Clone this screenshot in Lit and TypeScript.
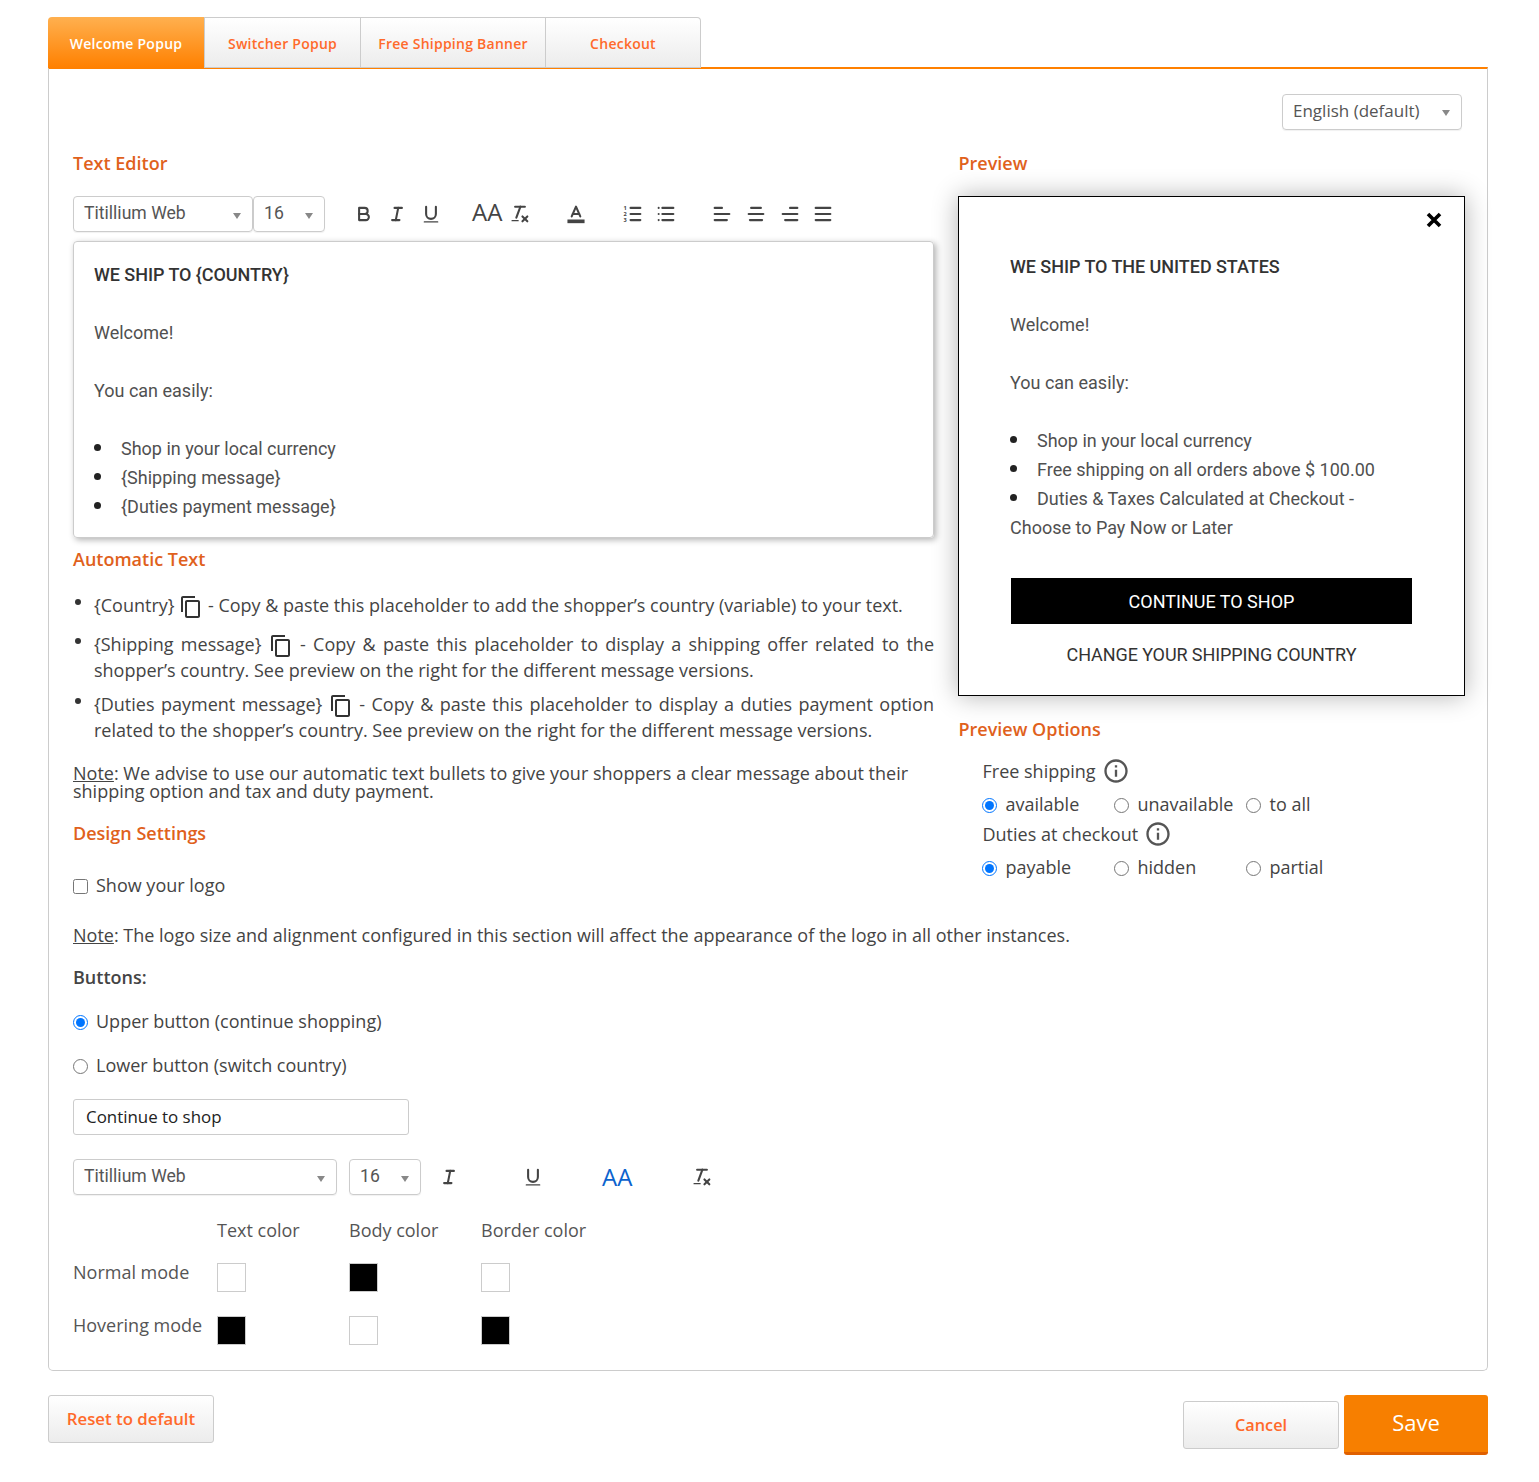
import { LitElement, html, css, svg } from "lit";
import { customElement } from "lit/decorators.js";

const st = (inner: unknown, size = 22) => html`<svg class="qi" width=${size} height=${size} viewBox="0 0 18 18">${inner}</svg>`;
const bold = () => st(svg`<path d="M5,4H9.5A2.5,2.5,0,0,1,12,6.5v0A2.5,2.5,0,0,1,9.5,9H5V4Z"/><path d="M5,9h5.5A2.5,2.5,0,0,1,13,11.5v0A2.5,2.5,0,0,1,10.5,14H5V9Z"/>`);
const italic = () => st(svg`<line x1="7" x2="13" y1="4" y2="4"/><line x1="5" x2="11" y1="14" y2="14"/><line x1="8" x2="10" y1="14" y2="4"/>`);
const underline = () => st(svg`<path d="M5,3V9a4,4,0,0,0,4,4H9a4,4,0,0,0,4-4V3"/><rect class="f" x="3" y="15" width="12" height="1" rx=".5"/>`);
const clean = () => st(svg`<line x1="5" x2="13" y1="3" y2="3"/><line x1="6" x2="9.35" y1="12" y2="3"/><line x1="11" x2="15" y1="11" y2="15"/><line x1="15" x2="11" y1="11" y2="15"/><rect class="f" x="2" y="14" width="6" height="1" rx=".5"/>`);
const color = () => st(svg`<polyline points="5.5 11 9 3 12.5 11"/><line x1="11.63" x2="6.38" y1="9" y2="9"/><rect class="f" x="2" y="13.5" width="14" height="3"/>`);
const ol = () => st(svg`<line x1="7" x2="15" y1="4" y2="4"/><line x1="7" x2="15" y1="9" y2="9"/><line x1="7" x2="15" y1="14" y2="14"/><text class="n" x="2.5" y="5.6">1</text><text class="n" x="2.5" y="10.6">2</text><text class="n" x="2.5" y="15.6">3</text>`);
const ul = () => st(svg`<line x1="6" x2="15" y1="4" y2="4"/><line x1="6" x2="15" y1="9" y2="9"/><line x1="6" x2="15" y1="14" y2="14"/><line x1="3" x2="3" y1="4" y2="4"/><line x1="3" x2="3" y1="9" y2="9"/><line x1="3" x2="3" y1="14" y2="14"/>`);
const al = (rows: number[][]) => st(rows.map((r, i) => svg`<line x1=${r[0]} x2=${r[1]} y1=${4 + i * 5} y2=${4 + i * 5}/>`));
const copy = () => html`<svg class="copy" width="24" height="24" viewBox="0 0 24 24"><path d="M16 1H4c-1.1 0-2 .9-2 2v14h2V3h12V1zm3 4H8c-1.1 0-2 .9-2 2v14c0 1.1.9 2 2 2h11c1.1 0 2-.9 2-2V7c0-1.1-.9-2-2-2zm0 16H8V7h11v14z"/></svg>`;
const info = () => html`<svg class="info" width="28" height="28" viewBox="0 0 24 24"><path d="M11 7h2v2h-2zm0 4h2v6h-2zm1-9C6.48 2 2 6.48 2 12s4.48 10 10 10 10-4.48 10-10S17.52 2 12 2zm0 18c-4.41 0-8-3.59-8-8s3.59-8 8-8 8 3.59 8 8-3.59 8-8 8z"/></svg>`;

@customElement("app-root")
export class AppRoot extends LitElement {
  static styles = css`
    :host { display: block; font-family: "Open Sans", sans-serif; font-size: 18px; color: #444; }
    * { box-sizing: border-box; }
    .page { width: 1440px; margin: 0 0 0 48px; padding: 17px 0 27px; }
    .tabs { display: flex; height: 51px; }
    .tab { display: flex; align-items: center; justify-content: center; padding-top: 2px; font-size: 14px; letter-spacing: .25px; font-weight: 600; color: #ff6a2b; border: 1px solid #ccc; border-left: 0; background: linear-gradient(#fff, #ececec); }
    .tab.active { width: 156px; color: #fff; border: 0; border-radius: 4px 0 0 0; background: linear-gradient(#ffb04f, #ff8000); }
    .tab:last-child { border-radius: 0 4px 0 0; }
    .w1 { width: 157px; border-left: 1px solid #ccc; }
    .w2 { width: 185px; }
    .w3 { width: 155px; }
    .panel { border: 1px solid #ccc; border-top: 2px solid #ff8000; border-radius: 0 0 5px 5px; padding: 25px 25px 25px 24px; height: 1304px; margin-top: -1px; }
    .lang-row { display: flex; justify-content: flex-end; }
    .select { display: flex; align-items: center; justify-content: space-between; height: 36px; border: 1px solid #ccc; border-radius: 4px; padding: 0 11px 3px 10px; box-shadow: 0 1px 1px rgba(0,0,0,.06); color: #555; }
    .select::after { content: ""; border: 4px solid transparent; border-top: 6px solid #888; border-bottom: 0; margin-top: 5px; }
    .lang { width: 180px; font-size: 17px; }
    .ti { font-family: "Roboto", sans-serif; font-size: 17.6px; padding-bottom: 2px; }
    .grid { display: grid; grid-template-columns: 861px 507px; column-gap: 24px; margin-top: 22px; }
    h2 { margin: 0; font-size: 18px; line-height: 22px; font-weight: 600; color: #e0611c; }
    .toolbar { display: flex; align-items: center; height: 36px; margin-top: 22px; }
    .qi { fill: none; stroke: #444; stroke-width: 1.7; stroke-linecap: round; stroke-linejoin: round; flex: none; display: block; }
    .qi .f { fill: #444; stroke: none; }
    .qi .n { fill: #444; stroke: none; font: 700 4.6px "Open Sans", sans-serif; text-anchor: middle; }
    .aa { font-size: 24px; line-height: 30px; color: #444; flex: none; }
    .aa.up { margin-bottom: 4px; }
    .aa.blue { color: #0b63ce; }
    .sp { flex: none; }
    .editor { height: 297px; margin-top: 9px; border: 1px solid #ccc; border-radius: 4px; padding: 18px 20px 16px; box-shadow: 2px 2px 6px rgba(0,0,0,.3); }
    .rich { font-family: "Roboto", sans-serif; font-size: 18px; line-height: 29px; color: #505050; }
    .rich p { margin: 0 0 29px; }
    .rich p.tight { margin: 0; }
    .rich .hd { font-weight: 500; color: #333; letter-spacing: -.05px; }
    .rich ul { margin: 0; padding: 0 0 0 27px; list-style: none; }
    .rich li { position: relative; }
    .rich li::before { content: ""; position: absolute; left: -27px; top: 10px; width: 7px; height: 7px; border-radius: 50%; background: #222; }
    .auto-h { margin-top: 10px; }
    .auto { list-style: none; margin: 22px 0 0; padding: 0; }
    .auto li { position: relative; padding-left: 21px; line-height: 26px; text-align: justify; }
    .auto li::before { content: ""; position: absolute; left: 2px; top: 7px; width: 6px; height: 6px; border-radius: 50%; background: #333; }
    .auto li:nth-child(1) { margin-bottom: 13px; }
    .auto li:nth-child(2) { margin-bottom: 8px; }
    .copy { fill: #333; vertical-align: 1px; margin: -8px 0 -8px 0; }
    .note-tight { margin: 21px 0 0; line-height: 18px; }
    u { text-decoration: underline; }
    .design-h { margin-top: 22px; }
    .check { display: flex; align-items: center; gap: 8px; line-height: 26px; }
    input[type="radio"], input[type="checkbox"] { width: 15px; height: 15px; margin: 2px 0 0; flex: none; }
    .logo { margin-top: 28px; }
    .popup { position: relative; height: 500px; margin-top: 22px; border: 1px solid #000; padding: 55px 52px 0 51px; box-shadow: 0 0 24px rgba(0,0,0,.3); }
    .x { position: absolute; right: 21px; top: 14px; }
    .cta { display: flex; align-items: center; justify-content: center; width: 401px; height: 46px; margin: 36px 0 0 1px; background: #000; color: #fff; font-family: "Roboto", sans-serif; font-size: 18px; }
    .cta2 { width: 401px; margin: 16px 0 0 1px; text-align: center; font-family: "Roboto", sans-serif; font-size: 18px; letter-spacing: -.1px; line-height: 29px; color: #333; }
    .head-r { padding-left: .5px; }
    .opt-h { margin-top: 22px; }
    .opts { padding-left: 24px; }
    .opts .check { gap: 8.5px; }
    .opt-l { display: flex; align-items: center; gap: 6px; line-height: 26px; height: 26px; padding-left: .5px; }
    .opt-l.first { margin-top: 18px; }
    .info { fill: #555; flex: none; }
    .radios { display: grid; grid-template-columns: repeat(3, 132px); height: 26px; margin: 7px 0 4px; }
    .full { margin: 24px 0 0; line-height: 26px; }
    .btns { margin: 16px 0 0; line-height: 26px; font-weight: 600; }
    .r1 { margin-top: 18px; }
    .input { display: block; width: 336px; height: 36px; margin-top: 21px; border: 1px solid #ccc; border-radius: 3px; padding: 0 12px 2px; font: 16.9px "Open Sans", sans-serif; color: #222; background: #fff; outline: 0; }
    .toolbar.t2 { margin-top: 24px; }
    .colors { display: grid; grid-template-columns: 144px 132px 132px 132px; margin-top: 22px; color: #555; }
    .colors div { line-height: 26px; }
    .colors .lab { height: 53px; }
    .colors .txt { margin-top: -4px; height: 57px; }
    .colors .head { height: 46px; }
    .sw { width: 29px; height: 29px; border: 1px solid #ccc; background: #fff; }
    .sw.k { background: #000; }
    .footer { display: flex; align-items: flex-start; margin-top: 24px; }
    .btn { display: flex; align-items: center; justify-content: center; font-size: 16px; font-weight: 600; color: #ff6a2b; border: 1px solid #ccc; border-radius: 3px; background: linear-gradient(#fff, #ececec); height: 48px; }
    .reset { width: 166px; font-size: 16.8px; padding-bottom: 2px; }
    .spacer { flex: 1; }
    .cancel { width: 156px; margin-top: 6px; font-size: 16.3px; }
    .save { width: 144px; height: 60px; margin-left: 5px; padding-bottom: 3px; border-bottom: 3px solid #e06000; border-radius: 3px; background: #f77f00; color: #fff; font-size: 22px; display: flex; align-items: center; justify-content: center; }
  `;

  private copyLine(ph: string, rest: string) {
    return html`<li>${ph} ${copy()} ${rest}</li>`;
  }

  private gap(w: number) {
    return html`<div class="sp" style="width:${w}px"></div>`;
  }

  render() {
    return html`<div class="page">
      <div class="tabs">
        <div class="tab active">Welcome Popup</div>
        <div class="tab w1">Switcher Popup</div>
        <div class="tab w2">Free Shipping Banner</div>
        <div class="tab w3">Checkout</div>
      </div>
      <div class="panel">
        <div class="lang-row"><div class="select lang">English (default)</div></div>
        <div class="grid">
          <div>
            <h2>Text Editor</h2>
            <div class="toolbar">
              <div class="select ti" style="width:180px">Titillium Web</div>
              <div class="select ti" style="width:72px">16</div>
              ${this.gap(28)}${bold()}${this.gap(11)}${italic()}${this.gap(12)}${underline()}
              ${this.gap(30)}<span class="aa up">AA</span>${this.gap(7)}${clean()}
              ${this.gap(34)}${color()}${this.gap(35)}${ol()}${this.gap(11)}${ul()}
              ${this.gap(34)}${al([[3, 9], [3, 15], [3, 13]])}${this.gap(12)}${al([[5, 13], [3, 15], [4, 14]])}${this.gap(12)}${al([[9, 15], [3, 15], [5, 15]])}${this.gap(11)}${al([[3, 15], [3, 15], [3, 15]])}
            </div>
            <div class="editor rich">
              <p class="hd">WE SHIP TO {COUNTRY}</p>
              <p>Welcome!</p>
              <p>You can easily:</p>
              <ul><li>Shop in your local currency</li><li>{Shipping message}</li><li>{Duties payment message}</li></ul>
            </div>
            <h2 class="auto-h">Automatic Text</h2>
            <ul class="auto">
              ${this.copyLine("{Country}", "- Copy & paste this placeholder to add the shopper’s country (variable) to your text.")}
              ${this.copyLine("{Shipping message}", "- Copy & paste this placeholder to display a shipping offer related to the shopper’s country. See preview on the right for the different message versions.")}
              ${this.copyLine("{Duties payment message}", "- Copy & paste this placeholder to display a duties payment option related to the shopper’s country. See preview on the right for the different message versions.")}
            </ul>
            <p class="note-tight"><u>Note</u>: We advise to use our automatic text bullets to give your shoppers a clear message about their shipping option and tax and duty payment.</p>
            <h2 class="design-h">Design Settings</h2>
            <label class="check logo"><input type="checkbox" />Show your logo</label>
          </div>
          <div>
            <h2 class="head-r">Preview</h2>
            <div class="popup rich">
              <svg class="x" width="18" height="18" viewBox="0 0 18 18"><path d="M3 3l12 12M15 3L3 15" stroke="#000" stroke-width="3.6" fill="none"/></svg>
              <p class="hd">WE SHIP TO THE UNITED STATES</p>
              <p>Welcome!</p>
              <p>You can easily:</p>
              <ul><li>Shop in your local currency</li><li>Free shipping on all orders above $ 100.00</li><li>Duties &amp; Taxes Calculated at Checkout -</li></ul>
              <p class="tight">Choose to Pay Now or Later</p>
              <div class="cta">CONTINUE TO SHOP</div>
              <div class="cta2">CHANGE YOUR SHIPPING COUNTRY</div>
            </div>
            <h2 class="opt-h head-r">Preview Options</h2>
            <div class="opts">
              <div class="opt-l first">Free shipping ${info()}</div>
              <div class="radios">
                <label class="check"><input type="radio" name="f" checked />available</label>
                <label class="check"><input type="radio" name="f" />unavailable</label>
                <label class="check"><input type="radio" name="f" />to all</label>
              </div>
              <div class="opt-l">Duties at checkout ${info()}</div>
              <div class="radios">
                <label class="check"><input type="radio" name="d" checked />payable</label>
                <label class="check"><input type="radio" name="d" />hidden</label>
                <label class="check"><input type="radio" name="d" />partial</label>
              </div>
            </div>
          </div>
        </div>
        <p class="full"><u>Note</u>: The logo size and alignment configured in this section will affect the appearance of the logo in all other instances.</p>
        <p class="btns">Buttons:</p>
        <label class="check r1"><input type="radio" name="b" checked />Upper button (continue shopping)</label>
        <label class="check r1"><input type="radio" name="b" />Lower button (switch country)</label>
        <input class="input" .value=${"Continue to shop"} />
        <div class="toolbar t2">
          <div class="select ti" style="width:264px">Titillium Web</div>
          ${this.gap(12)}
          <div class="select ti" style="width:72px">16</div>
          ${this.gap(17)}${italic()}${this.gap(62)}${underline()}${this.gap(58)}<span class="aa blue">AA</span>${this.gap(59)}${clean()}
        </div>
        <div class="colors">
          <div class="head"></div><div class="head">Text color</div><div class="head">Body color</div><div class="head">Border color</div>
          <div class="txt">Normal mode</div><div class="lab"><div class="sw"></div></div><div class="lab"><div class="sw k"></div></div><div class="lab"><div class="sw"></div></div>
          <div class="txt">Hovering mode</div><div class="lab"><div class="sw k"></div></div><div class="lab"><div class="sw"></div></div><div class="lab"><div class="sw k"></div></div>
        </div>
      </div>
      <div class="footer">
        <div class="btn reset">Reset to default</div>
        <div class="spacer"></div>
        <div class="btn cancel">Cancel</div>
        <div class="save">Save</div>
      </div>
    </div>`;
  }
}
